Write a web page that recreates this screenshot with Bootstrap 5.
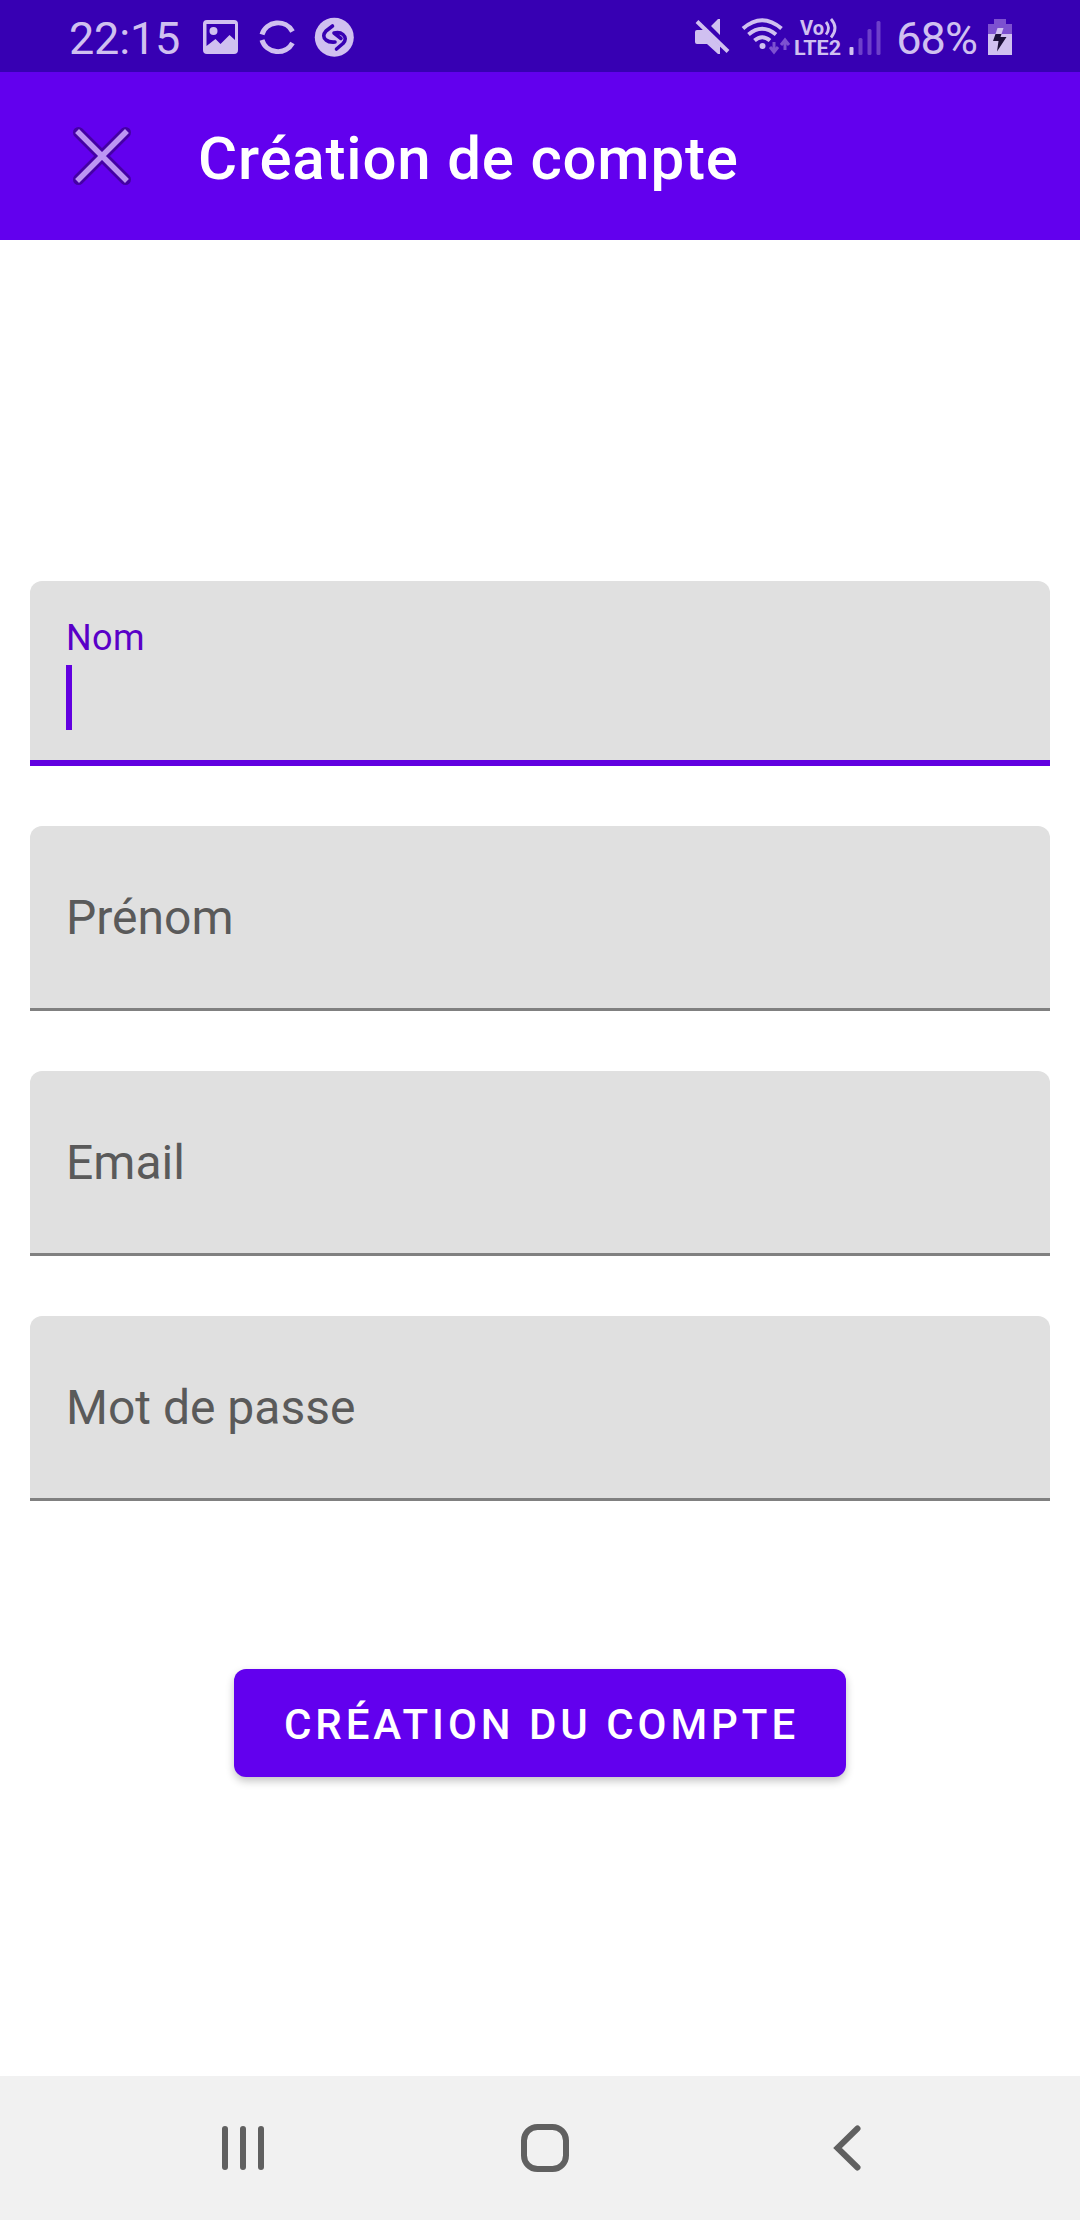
<!DOCTYPE html>
<html lang="fr">
<head>
<meta charset="utf-8">
<meta name="viewport" content="width=device-width, initial-scale=1">
<title>Création de compte</title>
<link href="https://cdn.jsdelivr.net/npm/bootstrap@5.3.0/dist/css/bootstrap.min.css" rel="stylesheet">
<style>
  body { font-family: Roboto, "Liberation Sans", sans-serif; background: #fff; }
  svg { display: block; flex: none; }
  .screen { width: 1080px; height: 2220px; overflow: hidden; }
  .status-bar { height: 72px; background: #3700b3; color: #d0c0f0; padding: 0 67px 0 69px; font-size: 45px; line-height: 67px; }
  .status-bar span { margin-top: 5px; }
  .clock { letter-spacing: -.2px; }
  .status-icons { margin-left: 20px; }
  .status-bar .pct { margin: 5px 10px 0 15px; letter-spacing: -.9px; }
  .app-bar { height: 168px; background: #6200ee; padding: 0 0 0 66px; }
  .app-title { font-size: 60px; font-weight: 500; line-height: 70px; letter-spacing: .8px; margin: 5px 0 0 60px; color: #fff; white-space: nowrap; }
  .close-btn { width: 72px; height: 72px; }
  .form-area { padding: 341px 30px 0; gap: 60px; }
  .field { height: 185px; padding: 0 36px; background: #e0e0e0; border-bottom: 3px solid #808080; border-radius: 12px 12px 0 0; font-size: 48px; line-height: 60px; color: #5a5a5a; }
  .field label { margin-top: 2px; }
  .field.active { border-bottom: 6px solid #6200e0; color: #5a00c8; }
  .field.active label { font-size: 36px; line-height: 42px; margin-top: 36px; letter-spacing: .4px; }
  .caret { width: 6px; height: 65px; margin-top: 6px; background: #6200e0; }
  .submit-btn { width: 612px; height: 108px; margin: 168px auto 0; padding: 0 0 0 3px; border: 0; border-radius: 12px; background: #6200ee; color: #fff; font-size: 42px; font-weight: 500; line-height: 112px; letter-spacing: 3.950px; white-space: nowrap; box-shadow: 0 4px 8px rgba(0,0,0,.24); }
  .nav-keys { height: 144px; background: #f1f1f1; }
  .vo { font: 700 20px Roboto, sans-serif; }
</style>
</head>
<body>
<div class="screen d-flex flex-column">
  <header>
    <div class="status-bar d-flex align-items-center">
      <span class="clock">22:15</span>
      <svg class="status-icons" width="160" height="72" viewBox="200 0 160 72" fill="#d0c0f0">
        <path fill-rule="evenodd" d="M207 20h27q4 0 4 4v26q0 4-4 4h-27q-4 0-4-4V24q0-4 4-4zm-.5 4v22l9-7 5 5 9-9 5.500 5V24z"/>
        <circle cx="213.500" cy="31" r="4"/>
        <path d="M262 34.500A16.500 16 0 0 1 292.500 31.500M262 40A16.500 16 0 0 0 292.500 43" fill="none" stroke="#d0c0f0" stroke-width="5"/>
        <circle cx="334.300" cy="37.300" r="19.500"/>
        <path d="M332.500 26L326 31Q321.500 36 326 40Q329 42.500 335 42M336.500 49L343 43.500Q347.500 38.500 343 34.500Q339.500 31.500 334 33L341 38.500" fill="none" stroke="#3700b3" stroke-width="3.600" stroke-linecap="round" stroke-linejoin="round"/>
      </svg>
      <svg class="ms-auto" width="190" height="72" viewBox="690 0 190 72" fill="#d0c0f0">
        <path d="M694 32q0-2 2-2h7l16 16v8h-2l-11-10h-10q-2 0-2-2zM710 26l7-7h2v16z"/>
        <path d="M696 21.500L727 51.500" stroke="#d0c0f0" stroke-width="4"/>
        <g fill="none" stroke="#d0c0f0" stroke-width="4"><path d="M742 28.500Q761 12 780.500 28.500M747.500 34.500Q761 23 775 34.500M753.500 40.500Q761 34 769 40.500"/></g>
        <circle cx="761.500" cy="46" r="3"/>
        <path d="M773 42v9M769 47l4 5 4-5M784 50V41M780 45l4-5 4 5" fill="none" stroke="#7d51d0" stroke-width="3"/>
        <text class="vo" x="799" y="34.500" textLength="24" lengthAdjust="spacingAndGlyphs">Vo</text>
        <path d="M825 22q5 6 0 12.500M830 19q8 9 0 18.500" fill="none" stroke="#d0c0f0" stroke-width="2.800"/>
        <text class="vo" x="793" y="54.500" textLength="47" lengthAdjust="spacingAndGlyphs">LTE2</text>
        <rect x="848.500" y="47" width="4" height="8" rx="1"/>
        <g fill="#6e40ca"><rect x="857.500" y="38" width="4" height="17" rx="1.500"/><rect x="866.500" y="29" width="4" height="26" rx="1.500"/><rect x="875.500" y="21" width="4" height="34" rx="1.500"/></g>
      </svg>
      <span class="pct">68%</span>
      <svg width="26" height="72" viewBox="986 0 26 72">
        <path d="M987 34V24h6v-5h12v5h6v10z" fill="#7d51d0"/>
        <path d="M987 34h24v21h-24z" fill="#d0c0f0"/>
        <path d="M996.500 28h6l-2 6h-6z" fill="#d0c0f0"/>
        <path d="M994.500 34h6l-1 3h6l-9.500 14.500 1.500-10.500h-5.500z" fill="#1c1038"/>
      </svg>
    </div>
    <div class="app-bar d-flex align-items-center">
      <svg class="close-btn" viewBox="66 120 72 72" fill="none" stroke-linecap="square" role="img" aria-label="Fermer">
        <path d="M78.500 132.500L125.500 179.500M125.500 132.500L78.500 179.500" stroke="#4400a4" stroke-width="11" stroke-linecap="round"/>
        <path d="M79 133L125 179M125 133L79 179" stroke="#bd96f3" stroke-width="5.500"/>
      </svg>
      <h1 class="app-title mb-0">Création de compte</h1>
    </div>
  </header>
  <main class="flex-grow-1">
    <form class="form-area d-flex flex-column">
      <div class="field active d-flex flex-column align-items-start"><label>Nom</label><span class="caret"></span></div>
      <div class="field d-flex align-items-center"><label>Prénom</label></div>
      <div class="field d-flex align-items-center"><label>Email</label></div>
      <div class="field d-flex align-items-center"><label>Mot de passe</label></div>
    </form>
    <button type="button" class="submit-btn btn d-block">CRÉATION DU COMPTE</button>
  </main>
  <footer class="nav-keys">
    <svg width="1080" height="144" viewBox="0 2076 1080 144" fill="none" stroke="#606060" stroke-width="6" stroke-linecap="round">
      <path d="M225 2129v38M243 2129v38M261 2129v38"/>
      <rect x="524" y="2127" width="42" height="42" rx="13.500"/>
      <path d="M857.500 2128.500L837.500 2148L857.500 2167.500"/>
    </svg>
  </footer>
</div>
<script src="https://cdn.jsdelivr.net/npm/bootstrap@5.3.0/dist/js/bootstrap.bundle.min.js"></script>
</body>
</html>
